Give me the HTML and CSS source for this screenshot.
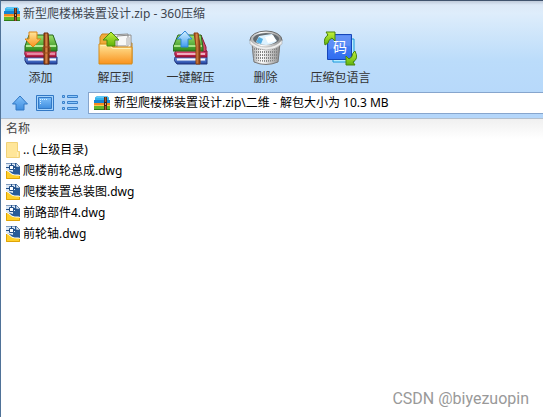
FILE: index.html
```html
<!DOCTYPE html>
<html lang="zh-CN">
<head>
<meta charset="utf-8">
<title>新型爬楼梯装置设计.zip - 360压缩</title>
<link rel="stylesheet" href="styles.css">
</head>
<body>
<svg class="defs" aria-hidden="true">
  <defs>
    <linearGradient id="green" x2="0" y2="1"><stop stop-color="#9be06b"/><stop offset="1" stop-color="#2d8a1c"/></linearGradient>
    <linearGradient id="red" x2="0" y2="1"><stop stop-color="#f06a92"/><stop offset="1" stop-color="#a80f35"/></linearGradient>
    <linearGradient id="blue" x2="0" y2="1"><stop stop-color="#7aa4ee"/><stop offset="1" stop-color="#1d3f9e"/></linearGradient>
    <linearGradient id="strap"><stop stop-color="#7a3210"/><stop offset=".45" stop-color="#e08a48"/><stop offset="1" stop-color="#6e2c0c"/></linearGradient>
    <linearGradient id="orange" x2="0" y2="1"><stop stop-color="#ffe79a"/><stop offset="1" stop-color="#f9921d"/></linearGradient>
    <linearGradient id="lime" x2="0" y2="1"><stop stop-color="#c6f23c"/><stop offset="1" stop-color="#5fb30c"/></linearGradient>
    <linearGradient id="sky" x2="0" y2="1"><stop stop-color="#d6f2ff"/><stop offset="1" stop-color="#3f9bf0"/></linearGradient>
    <linearGradient id="metal"><stop stop-color="#a8a8a8"/><stop offset=".35" stop-color="#ffffff"/><stop offset="1" stop-color="#8c8c8c"/></linearGradient>
    <linearGradient id="code" x2="0" y2="1"><stop stop-color="#5a8cf5"/><stop offset="1" stop-color="#2f6cf0"/></linearGradient>
    <linearGradient id="nav" x2="0" y2="1"><stop stop-color="#80c0fa"/><stop offset="1" stop-color="#3f8ee0"/></linearGradient>
    <pattern id="mesh" width="2" height="3" patternUnits="userSpaceOnUse"><rect width="1" height="2" fill="#858585"/></pattern>
    <symbol id="archive" viewBox="0 0 16 14">
      <path d="M1 1.5 3 0h10l2 1.5V5H1z" fill="#35b4ee"/><path d="M2 1.500 3.500.5h9l1.500 1z" fill="#8edafa"/>
      <path d="M0 4h16v4H0z" fill="#1684d4"/><path d="M0 7h16v3H0z" fill="#f58a20"/><path d="M0 9h16v1H0z" fill="#ffc44e"/>
      <path d="M0 10h16v3H0z" fill="#62b72c"/><path d="M0 13h16v1H0z" fill="#2e7d17"/>
      <path d="M10 1h3v13h-3z" fill="#5c2b14"/><path d="M11 1h1v13h-1z" fill="#a35c34"/><path d="M10 6h3v4h-3z" fill="#422012"/><path d="M11 7h1v2h-1z" fill="#d3a16e"/>
    </symbol>
    <symbol id="dwg" viewBox="0 0 14 16">
      <path d="M0 0h10l4 4v12H0z" fill="#2a5c98"/>
      <path d="M0 0h9v3H7v2h2v1H7v3L0 7z" fill="#dce9f7"/>
      <path d="M10 0v4h4z" fill="#e4eefa" stroke="#315b8e" stroke-width=".6"/>
      <path d="M0 0h10" stroke="#234f86"/>
      <path d="M0 4.500h3M5.500 0v3M8 4.500h3" stroke="#234f86"/>
      <path d="M3.500 2.500h4v4h-4z" fill="#fff" stroke="#234f86"/>
      <path d="M0 7c3-.5 4 3 7 4 2 1 5 0 7 1v4H0z" fill="#fff"/>
      <path d="M0 8c3 0 4 3 7 4 2 .7 5 .3 7 .8V16H0z" fill="#ffd02a"/>
      <path d="M.5 8v7.500h13V13" fill="none" stroke="#dfa407"/>
    </symbol>
  </defs>
</svg>
<main class="window">
  <header class="chrome">
    <div class="titlebar">
      <svg class="archive-icon"><use href="#archive"/></svg>
      <h1>新型爬楼梯装置设计.zip - 360压缩</h1>
    </div>
    <nav class="toolbar">
      <button class="tool">
        <svg viewBox="0 0 36 36">
          <path d="M2 27h32v7H4q-3-3-2-7" fill="url(#blue)" stroke="#24377a"/><path d="M5 29.500h28" stroke="#fff" stroke-width="2"/>
          <path d="M2 21h31v6H3q-2-3-1-6" fill="url(#red)" stroke="#8d1536"/><path d="M4 24h28" stroke="#ffd5e0"/>
          <path d="M6 5h24l4 11v5H2v-5z" fill="url(#green)" stroke="#28651d"/><path d="M3 16h30" stroke="#d4ffb7" stroke-width="1.500"/>
          <path d="m21 3 4 0 1 12v19h-5z" fill="url(#strap)" stroke="#6d2c0b"/><path d="M20 17h7v6h-7z" fill="none" stroke="#9b4a1d"/>
          <path d="M6 2h8v7h4L10 17 2 9h4z" fill="url(#orange)" stroke="#dc8517"/>
        </svg>
        <span>添加</span>
      </button>
      <button class="tool">
        <svg viewBox="0 0 36 36">
          <path d="M2 33V7l2-3h8l2 3v6h20v20z" fill="#f0aa38" stroke="#c98517"/>
          <path d="m12 5 18-1v12H12zM19 6l14-1v13H19z" fill="#f8f8f8" stroke="#8d8d8d"/><path d="m28 8 4-1v8l-4 1z" fill="#d2d2d2"/>
          <path d="M1 14h11l3 3h19v17H1z" fill="url(#orange)" stroke="#d58b18"/><path d="M2.500 15.500h9l3 3h18" fill="none" stroke="#fff0b4"/>
          <path d="M13 2 21 10h-4v6H9v-6H5z" fill="url(#lime)" stroke="#488c0f"/>
        </svg>
        <span>解压到</span>
      </button>
      <button class="tool">
        <svg viewBox="0 0 36 36">
          <path d="M2 27h32v7H4q-4-3-2-7" fill="url(#blue)" stroke="#24377a"/><path d="M4 29.500h28" stroke="#fff" stroke-width="2"/>
          <path d="M4 19h26l4 2v6H3q-3-4 1-8" fill="url(#red)" stroke="#8d1536"/><path d="M4 24h28" stroke="#ffd5e0" stroke-width="1.500"/>
          <path d="M28 5l5 12v5l-7-2z" fill="#d14c6b" stroke="#8d1536"/>
          <path d="M5 5h23l2 12v4H0v-4z" fill="url(#green)" stroke="#28651d"/><path d="M1 16h28" stroke="#c6f6a0" stroke-width="1.500"/>
          <path d="m21 3 4 0 2 12v19h-4V16z" fill="url(#strap)" stroke="#8d410f"/>
          <path d="m12 1 7 8h-4v8H8V9H4z" fill="url(#sky)" stroke="#2e86d7"/>
        </svg>
        <span>一键解压</span>
      </button>
      <button class="tool">
        <svg viewBox="0 0 36 36">
          <path d="M4 12q1 14 2 20 12 5 24 0 1-7 2-20z" fill="url(#metal)" stroke="#777"/>
          <path d="M6 17q12 4 24 0l-1 13q-11 4-22 0z" fill="url(#mesh)"/>
          <ellipse cx="18" cy="10" rx="16" ry="9" fill="url(#metal)" stroke="#6c6c6c"/>
          <path d="M2 10v4q7 6 16 6t16-6v-4q-6 7-16 7T2 10" fill="#eee" stroke="#9a9a9a" stroke-width=".5"/>
          <ellipse cx="18" cy="9" rx="13" ry="6" fill="#646b70"/>
          <path d="m8 12 3-6 6-1 7-1 5 7q-5 4-11 4-6 0-10-3" fill="#ddf2ff"/><path d="m8 12 3-5 4 2-2 5" fill="#55afe3"/><path d="m17 7 8-2 3 6-8 2z" fill="#fff"/>
        </svg>
        <span>删除</span>
      </button>
      <button class="tool">
        <svg viewBox="0 0 36 36">
          <path d="M10 9h21v23H10z" fill="#b9eeff" stroke="#1798dc"/>
          <path d="M4.500 4.500h24v25h-24z" fill="url(#code)" stroke="#1746b8"/><path d="M6 6h21v10q-11-2-21 4z" fill="#729cf7" opacity=".5"/>
          <text x="17" y="22" class="code-glyph">码</text>
          <path d="M2 15Q0 8 5 5L3 2h9v9L9 8q-4 2-4 5z" fill="url(#lime)" stroke="#4a850d"/>
          <path d="M32 21q4 8-2 11l2 3h-9v-9l3 3q4-2 4-6z" fill="url(#lime)" stroke="#4a850d"/>
        </svg>
        <span>压缩包语言</span>
      </button>
    </nav>
    <div class="address-row">
      <button class="nav-button" aria-label="上级目录"><svg viewBox="0 0 18 16"><path d="m9 1 7.500 8H13v6H5V9H1.500z" fill="url(#nav)" stroke="#3278c5"/></svg></button>
      <button class="nav-button" aria-label="图标"><svg viewBox="0 0 18 16"><path d="M.5.5h17v15H.5z" fill="#a5d3fb" stroke="#3278c5"/><path d="M2.500 2.500h13v11h-13z" fill="url(#nav)" stroke="#3278c5"/><path d="M4.500 4v6M6 4.500h6" stroke="#d8efff" stroke-dasharray="1"/></svg></button>
      <button class="nav-button" aria-label="列表"><svg viewBox="0 0 18 16"><path d="M1.500.5h2v2h-2zM6.500.5h10v2h-10zM1.500 6.500h2v2h-2zM6.500 6.500h10v2h-10zM1.500 12.500h2v2h-2zM6.500 12.500h10v2h-10z" fill="#8cc7fb" stroke="#3a80ca"/></svg></button>
      <label class="address">
        <svg class="archive-icon"><use href="#archive"/></svg>
        <input type="text" aria-label="地址" value="新型爬楼梯装置设计.zip\二维 - 解包大小为 10.3 MB">
      </label>
    </div>
  </header>
  <table class="files">
    <thead><tr><th>名称</th></tr></thead>
    <tbody>
      <tr><td><div class="file"><svg viewBox="0 0 14 16"><path d="M.5.5h11v9h2v6H.5z" fill="#ffe699" stroke="#f1d278"/><path d="M11.500 10v5" stroke="#fff0bd"/></svg>.. (上级目录)</div></td></tr>
      <tr><td><div class="file"><svg><use href="#dwg"/></svg>爬楼前轮总成.dwg</div></td></tr>
      <tr><td><div class="file"><svg><use href="#dwg"/></svg>爬楼装置总装图.dwg</div></td></tr>
      <tr><td><div class="file"><svg><use href="#dwg"/></svg>前路部件4.dwg</div></td></tr>
      <tr><td><div class="file"><svg><use href="#dwg"/></svg>前轮轴.dwg</div></td></tr>
    </tbody>
  </table>
  <footer class="credit">CSDN @biyezuopin</footer>
</main>
</body>
</html>
```
FILE: styles.css
```css
* { box-sizing: border-box; }

body {
  margin: 0;
  background: #fff;
  color: #000;
  font: 12px/20px "Noto Sans", "Noto Sans CJK SC", sans-serif;
}

svg { display: block; flex: none; }
.defs { position: absolute; width: 0; height: 0; }

button {
  padding: 0;
  border: 0;
  background: none;
  color: #333;
  font: inherit;
}

.window {
  display: flex;
  flex-direction: column;
  min-height: 100vh;
  border-top: 1px solid #40536d;
  border-left: 1px solid #4f7298;
}

.chrome {
  padding-bottom: 4px;
  border-bottom: 1px solid #b3bfcd;
  background: linear-gradient(#bfcad9 0, #dce9f7 4px, #deedfb 12px, #bbdcfa 60px, #b4d6fa 100%);
}

.titlebar {
  display: flex;
  align-items: center;
  gap: 3px;
  height: 26px;
  padding-left: 3px;
}

.titlebar h1 {
  margin: 0;
  color: #3d444d;
  font-size: 12px;
  font-weight: 400;
}

.archive-icon { width: 16px; height: 14px; }

.toolbar { display: flex; padding-left: 2px; }

.tool {
  display: flex;
  flex-direction: column;
  align-items: center;
  width: 75px;
  padding-top: 3px;
}

.tool svg { width: 36px; height: 36px; }
.tool span { line-height: 24px; white-space: nowrap; }

.code-glyph {
  fill: #fff;
  font-size: 14px;
  text-anchor: middle;
}

.address-row {
  display: flex;
  align-items: center;
  gap: 7px;
  padding: 2px 0 0 10px;
}

.nav-button svg { width: 18px; height: 16px; }

.address {
  display: flex;
  flex: 1;
  align-items: center;
  gap: 4px;
  height: 22px;
  margin-left: 2px;
  padding-left: 5px;
  border: 1px solid #86a5cd;
  border-right: 0;
  background: #fff;
}

.address input {
  flex: 1;
  min-width: 0;
  padding: 0;
  border: 0;
  outline: 0;
  background: none;
  color: #000;
  font: inherit;
}

.files { width: 100%; border-collapse: collapse; }

.files th {
  height: 20px;
  padding: 0 5px;
  background: linear-gradient(#f0f0f0, #fff);
  color: #444;
  font-weight: 400;
  text-align: left;
}

.files td { height: 21px; padding: 0 5px; }

.file { display: flex; align-items: center; gap: 3px; }
.file svg { width: 14px; height: 16px; }

.credit {
  margin-top: auto;
  padding: 0 14px 6px;
  color: #999;
  font: 16px/24px Roboto, sans-serif;
  text-align: right;
}
```
